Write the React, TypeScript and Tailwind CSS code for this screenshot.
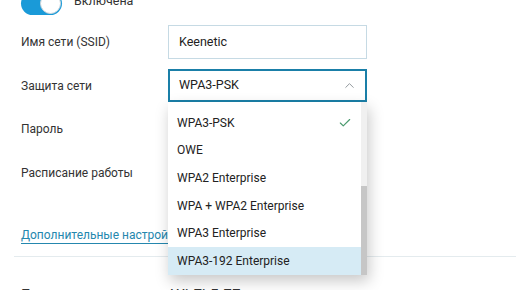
import React from "react";
import { ChevronUp, Check } from "lucide-react";

const options = [
  "WPA3-PSK",
  "OWE",
  "WPA2 Enterprise",
  "WPA + WPA2 Enterprise",
  "WPA3 Enterprise",
  "WPA3-192 Enterprise",
];

function Row({ label, children }: { label: string; children?: React.ReactNode }) {
  return (
    <div className="grid grid-cols-[147px_199px] items-center">
      <div className="text-[12px] text-[#333]">{label}</div>
      <div className="h-[34px]">{children}</div>
    </div>
  );
}

export default function App() {
  return (
    <div
      className="w-[516px] h-[290px] overflow-hidden bg-white"
      style={{ fontFamily: "Roboto, 'Liberation Sans', sans-serif" }}
    >
      <div className="-mt-[8px] pl-[21px] flex flex-col gap-[10px]">
        <div className="flex items-center gap-[12px] h-[23px]">
          <div className="w-[41px] h-[23px] rounded-full bg-[#1a9ad8] flex items-center justify-end pr-[1px]">
            <div className="w-[21px] h-[21px] rounded-full bg-white border border-[#d0d7db]" />
          </div>
          <span className="text-[12.5px] text-[#333] -mt-[4px]">Включена</span>
        </div>

        <Row label="Имя сети (SSID)">
          <div className="h-[34px] border border-[#c6dae4] px-[10px] flex items-center text-[12.5px] text-[#222]">
            Keenetic
          </div>
        </Row>

        <div className="relative">
          <div className="grid grid-cols-[147px_199px] items-center">
            <div className="text-[12px] text-[#333]">Защита сети</div>
            <div className="h-[33px] border-2 border-[#1a7fa8] pl-[9px] pr-[8px] flex items-center justify-between text-[12.5px] text-[#222]">
              <span>WPA3-PSK</span>
              <ChevronUp size={15} strokeWidth={1.5} className="text-[#8a9196]" />
            </div>
          </div>

          {/* open dropdown, scrolled to the bottom */}
          <div className="absolute left-[147px] top-[33px] w-[199px] h-[173px] bg-white shadow-[2px_6px_14px_rgba(0,0,0,0.22)] flex overflow-hidden z-10">
            <div className="flex-1 flex flex-col pt-[7px]">
              {options.map((o, i) => (
                <div
                  key={o}
                  className={`h-[27.6px] shrink-0 flex items-center justify-between pl-[9px] pr-[9px] text-[12px] text-[#222] ${
                    i === options.length - 1 ? "bg-[#d6ebf5]" : ""
                  }`}
                >
                  <span>{o}</span>
                  {i === 0 && <Check size={14} strokeWidth={2} className="text-[#4a9a6e]" />}
                </div>
              ))}
            </div>
            <div className="w-[6px] bg-[#f0f0f0] flex flex-col justify-end">
              <div className="h-[89px] bg-[#c6c6c6]" />
            </div>
          </div>
        </div>

        <Row label="Пароль" />
        <Row label="Расписание работы" />

        <div className="pt-[22px]">
          <span className="text-[12px] text-[#2587ae] border-b border-[#2587ae] pb-[1px]">
            Дополнительные настройки
          </span>
        </div>
      </div>

      <div className="ml-[14px] mt-[10px] h-px bg-[#e4ebee]" />

      <div className="pl-[21px] pt-[27px] text-[16px] text-[#333] leading-[24px]">
        Беспроводная сеть Wi-Fi 5 ГГц
      </div>
    </div>
  );
}
